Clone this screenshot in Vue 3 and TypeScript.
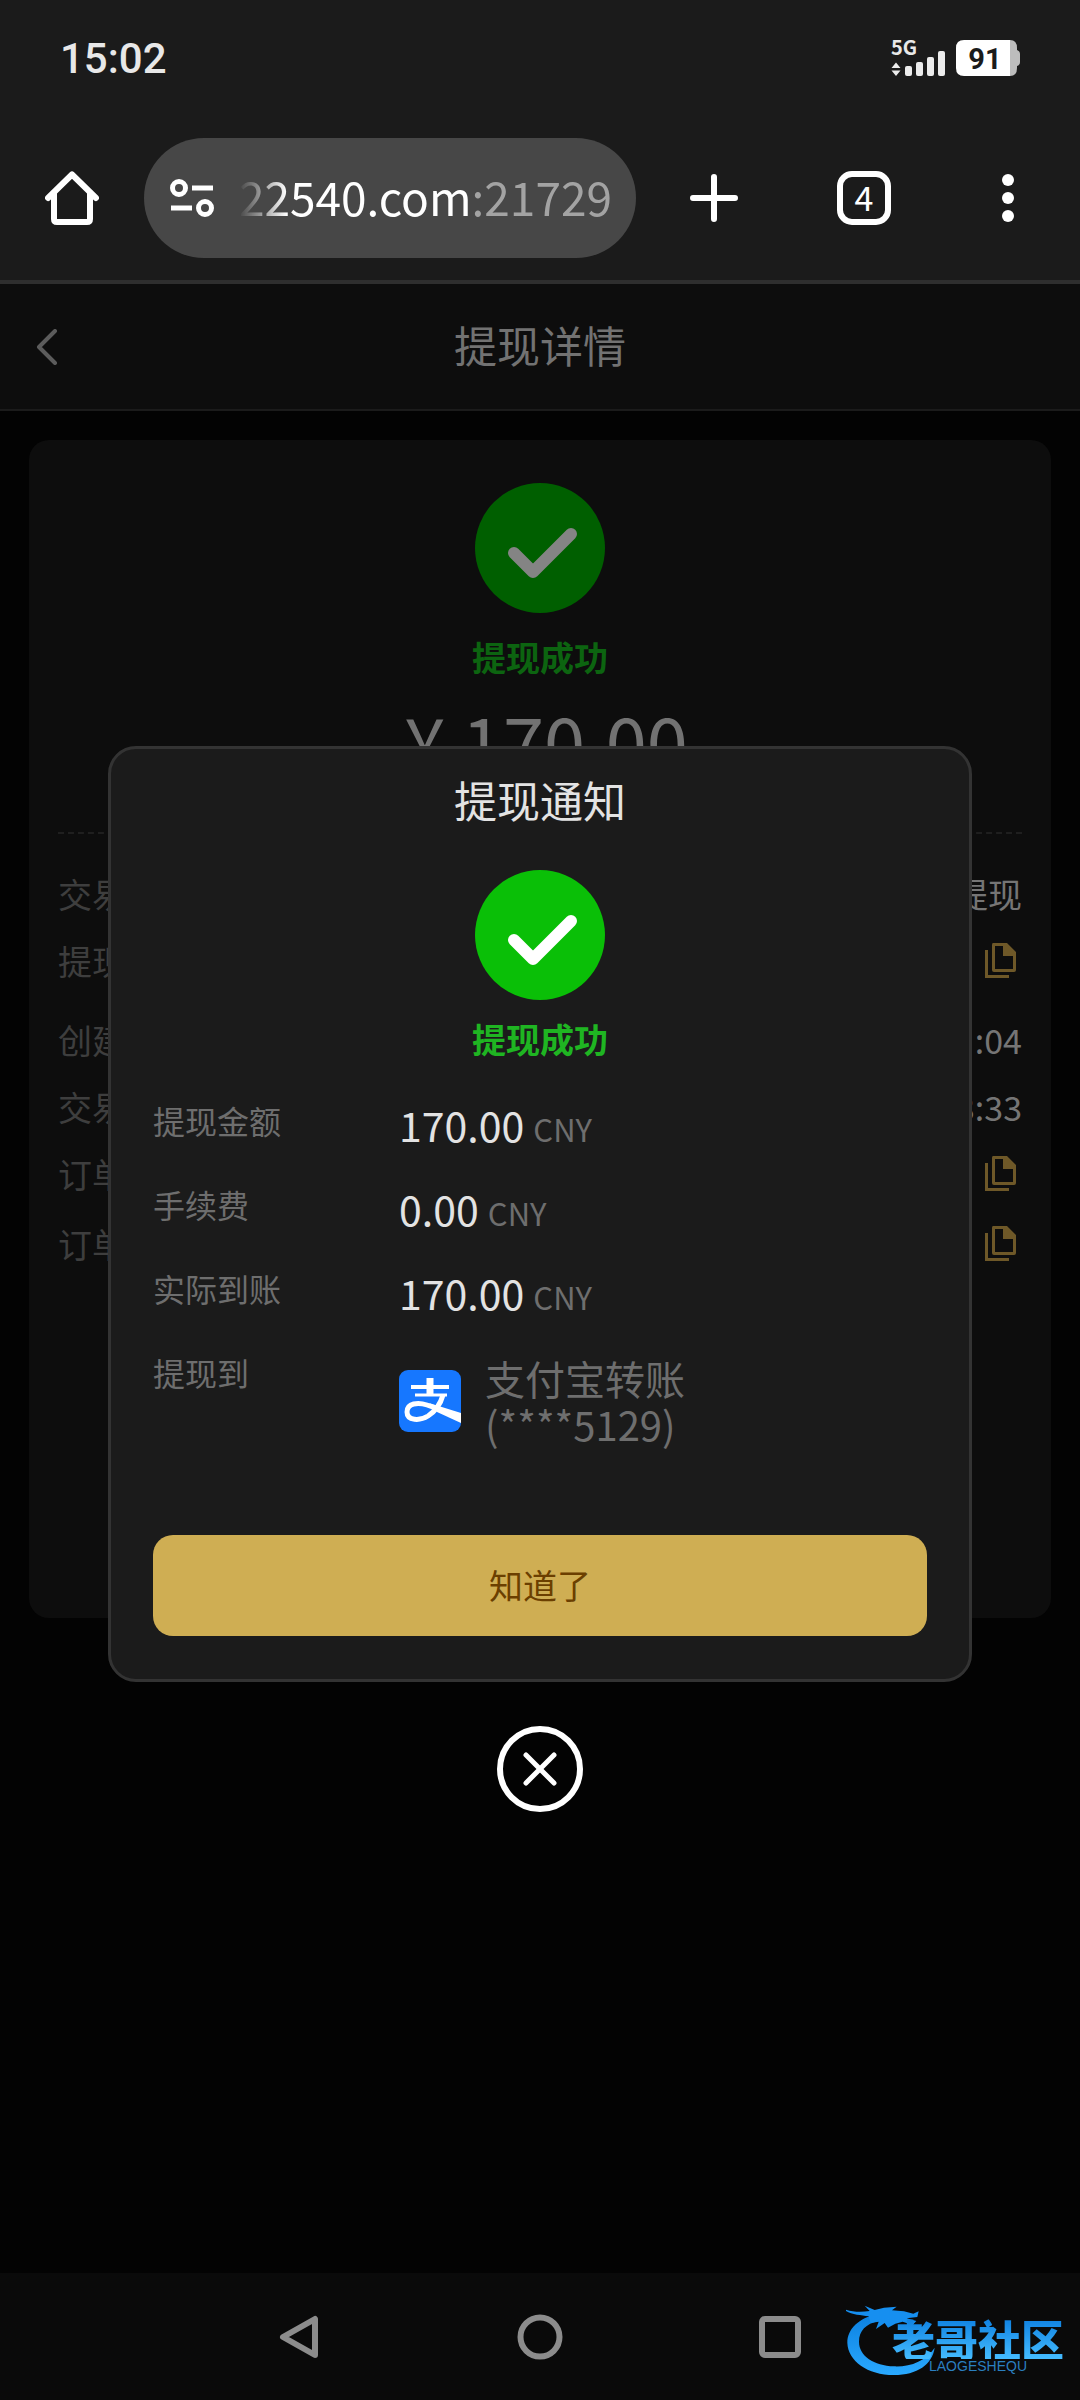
<script setup lang="ts">
interface DetailRow {
  label: string
  value?: string
  copy?: boolean
  gap?: 'wide' | 'small'
}

interface AmountRow {
  label: string
  amount: string
}

const details: DetailRow[] = [
  { label: '交易类型', value: '提现' },
  { label: '提现方式', copy: true },
  { label: '创建时间', value: ':04', gap: 'wide' },
  { label: '交易时间', value: '3:33' },
  { label: '订单号', copy: true },
  { label: '订单编号', copy: true, gap: 'small' },
]

const amounts: AmountRow[] = [
  { label: '提现金额', amount: '170.00' },
  { label: '手续费', amount: '0.00' },
  { label: '实际到账', amount: '170.00' },
]
</script>

<template>
  <div class="screen">
    <header class="chrome">
      <div class="status">
        <span class="clock">15:02</span>
        <div class="indicators">
          <div class="signal">
            <span class="network">5G</span>
            <svg class="bars" width="56" height="36" viewBox="0 0 56 36" aria-hidden="true">
              <path d="M5 22.500L9.500 28H.5zM5 36L.5 30.500h9z" />
              <rect x="14" y="26" width="7" height="10" rx="2" />
              <rect x="25" y="22" width="7" height="14" rx="2" />
              <rect x="36" y="17" width="7" height="19" rx="2" />
              <rect x="47" y="11" width="7" height="25" rx="2" />
            </svg>
          </div>
          <div class="battery">
            <svg width="64" height="36" viewBox="0 0 64 36" aria-hidden="true">
              <path d="M50 0h4q7 0 7 8v2q3 1 3 4v8q0 3-3 4v2q0 8-7 8h-4z" fill="#bdbdbd" />
              <path d="M8 0h46v36H8q-8 0-8-8V8q0-8 8-8z" fill="#fff" />
            </svg>
            <span class="level">91</span>
          </div>
        </div>
      </div>
      <div class="toolbar">
        <button class="icon-button" aria-label="主页">
          <svg width="54" height="54" viewBox="0 0 54 54" fill="none" stroke="#fff" stroke-width="6" stroke-linecap="round" stroke-linejoin="round">
            <path d="M3 27L27 3.500 51 27" />
            <path d="M9 22v26q0 3 3 3h30q3 0 3-3V22" />
          </svg>
        </button>
        <button class="address">
          <svg width="44" height="40" viewBox="0 0 44 40" fill="none" stroke="#fff" stroke-width="5">
            <circle cx="9" cy="10" r="6.500" />
            <path d="M22 10h21M1 30h21" />
            <circle cx="35" cy="30" r="6.500" />
          </svg>
          <span class="url">22540.com<span class="port">:21729</span></span>
        </button>
        <div class="actions">
          <button class="icon-button action" aria-label="新标签页">
            <svg width="48" height="48" viewBox="0 0 48 48" stroke="#fff" stroke-width="6" stroke-linecap="round">
              <path d="M24 3v42M3 24h42" />
            </svg>
          </button>
          <button class="icon-button action" aria-label="标签页">
            <span class="tabs">4</span>
          </button>
          <button class="icon-button action last" aria-label="菜单">
            <svg width="12" height="48" viewBox="0 0 12 48" fill="#fff">
              <circle cx="6" cy="6" r="6" />
              <circle cx="6" cy="24" r="6" />
              <circle cx="6" cy="42" r="6" />
            </svg>
          </button>
        </div>
      </div>
    </header>

    <main class="page">
      <nav class="navbar">
        <button class="icon-button back" aria-label="返回">
          <svg width="22" height="36" viewBox="0 0 22 36" fill="none" stroke="#5c5c5c" stroke-width="4" stroke-linecap="round" stroke-linejoin="round">
            <path d="M19 2L3 18l16 16" />
          </svg>
        </button>
        <h1 class="title">提现详情</h1>
      </nav>

      <section class="card">
        <svg class="badge" width="130" height="130" viewBox="0 0 130 130">
          <circle cx="65" cy="65" r="65" fill="#005f00" />
          <path d="M39 70l19 19 38-38" fill="none" stroke="#848484" stroke-width="12" stroke-linecap="round" stroke-linejoin="round" />
        </svg>
        <p class="result dim">提现成功</p>
        <p class="total">¥ 170.00</p>
        <hr class="divider" />
        <dl class="details">
          <div v-for="row in details" :key="row.label" class="detail" :class="row.gap">
            <dt>{{ row.label }}</dt>
            <dd>
              {{ row.value }}
              <button v-if="row.copy" class="icon-button copy" aria-label="复制">
                <svg width="31" height="35" viewBox="0 0 31 35" fill="#6e5828">
                  <path d="M0 7h3v25h21v3H0z" />
                  <path fill-rule="evenodd" d="M8 0h14l9 9v18q0 2-2 2H9q-2 0-2-2V2q0-2 1-2zM10 3v23h18V13H18V3z" />
                </svg>
              </button>
            </dd>
          </div>
        </dl>
      </section>

      <div class="overlay">
        <section class="modal" role="dialog" aria-labelledby="notice-title">
          <h2 id="notice-title" class="modal-title">提现通知</h2>
          <svg class="badge" width="130" height="130" viewBox="0 0 130 130">
            <circle cx="65" cy="65" r="65" fill="#0abf07" />
            <path d="M39 70l19 19 38-38" fill="none" stroke="#fff" stroke-width="12" stroke-linecap="round" stroke-linejoin="round" />
          </svg>
          <p class="result">提现成功</p>
          <dl class="amounts">
            <div v-for="row in amounts" :key="row.label" class="amount-row">
              <dt>{{ row.label }}</dt>
              <dd>{{ row.amount }} <span class="unit">CNY</span></dd>
            </div>
            <div class="amount-row">
              <dt>提现到</dt>
              <dd class="account">
                <svg width="62" height="62" viewBox="0 0 62 62">
                  <rect width="62" height="62" rx="9" fill="#1677ff" />
                  <g fill="none" stroke="#fff">
                    <path d="M31 8v17" stroke-width="7" />
                    <path d="M12 17h38" stroke-width="4" />
                    <path d="M16 25h32" stroke-width="3" />
                    <path d="M44 25C41 36 35 42 29 46 21 51 8 51 8 42 8 33 19 32 28 35L42 40" stroke-width="5" />
                  </g>
                  <path d="M30 33l32 10v10L38 42z" fill="#fff" />
                </svg>
                <span>支付宝转账<br />(****5129)</span>
              </dd>
            </div>
          </dl>
          <button class="confirm">知道了</button>
        </section>
        <button class="icon-button" aria-label="关闭">
          <svg width="86" height="86" viewBox="0 0 86 86" fill="none" stroke="#fff" stroke-width="6" stroke-linecap="round">
            <circle cx="43" cy="43" r="40" />
            <path d="M29 29l28 28M57 29L29 57" stroke-width="5" />
          </svg>
        </button>
      </div>
    </main>

    <footer class="system">
      <button class="icon-button key" aria-label="返回上一级">
        <svg width="46" height="46" viewBox="0 0 46 46" fill="none" stroke="#8c8c8c" stroke-width="6" stroke-linejoin="round">
          <path d="M6 23L38 5v36z" />
        </svg>
      </button>
      <button class="icon-button key" aria-label="主屏幕">
        <svg width="46" height="46" viewBox="0 0 46 46" fill="none" stroke="#8c8c8c" stroke-width="6">
          <circle cx="23" cy="23" r="19.500" />
        </svg>
      </button>
      <button class="icon-button key" aria-label="最近任务">
        <svg width="46" height="46" viewBox="0 0 46 46" fill="none" stroke="#8c8c8c" stroke-width="6">
          <rect x="5" y="5" width="36" height="36" rx="3" />
        </svg>
      </button>
      <div class="watermark">
        <svg width="92" height="74" viewBox="60 96 276 222" aria-hidden="true">
          <defs>
            <linearGradient id="sea" x1="0" y1="0" x2="0" y2="1">
              <stop offset="0" stop-color="#0b80e0" />
              <stop offset="1" stop-color="#2aa9ff" />
            </linearGradient>
          </defs>
          <path fill="url(#sea)" d="M165 128C102 140 70 175 70 215 72 270 130 312 210 312 280 312 325 280 332 230 305 270 260 288 210 286 150 284 105 255 105 212 105 180 125 158 165 150z" />
          <path fill="#168ff0" d="M66 116C90 124 115 123 137 120L122 104 152 117 180 110 218 107 204 118 240 121 268 128 284 121 280 138 248 142 277 150 266 162 236 152 214 158 192 170 182 156 156 174 164 152 140 156 134 136C112 132 84 132 66 120z" />
        </svg>
        <div class="brand">
          <strong>老哥社区</strong>
          <small>LAOGESHEQU</small>
        </div>
      </div>
    </footer>
  </div>
</template>

<style>
html,
body {
  background: #030303;
}
</style>

<style scoped>
.screen {
  display: flex;
  flex-direction: column;
  min-height: 100vh;
  background: #030303;
  color: #e8e8e8;
  font-family: "Noto Sans CJK SC", "Noto Sans", sans-serif;
}

h1,
h2,
p,
dl,
dd {
  margin: 0;
}

button {
  border: 0;
  padding: 0;
  background: none;
  color: inherit;
  font: inherit;
}

svg {
  display: block;
  flex: none;
}

.icon-button {
  display: flex;
  align-items: center;
  justify-content: center;
}

.chrome {
  background: #1b1b1b;
  border-bottom: 4px solid #2e2e2e;
}

.status {
  display: flex;
  align-items: center;
  justify-content: space-between;
  height: 116px;
  padding: 0 60px;
}

.clock {
  padding-top: 2px;
  font-family: Roboto, sans-serif;
  font-size: 42px;
  line-height: 48px;
  font-weight: 500;
}

.indicators {
  display: flex;
  gap: 9px;
}

.signal,
.battery {
  position: relative;
}

.network {
  position: absolute;
  top: -3px;
  left: 0;
  font-size: 20px;
  line-height: 20px;
  font-weight: 700;
}

.bars {
  fill: #ececec;
}

.level {
  position: absolute;
  inset: 0 6px 0 0;
  color: #1b1b1b;
  font-family: Roboto, sans-serif;
  font-size: 29px;
  line-height: 38px;
  font-weight: 700;
  text-align: center;
}

.toolbar {
  display: flex;
  align-items: center;
  height: 164px;
  padding-left: 45px;
}

.address {
  display: flex;
  flex: 1;
  align-items: center;
  justify-content: space-between;
  height: 120px;
  margin-left: 45px;
  padding: 0 24px 0 26px;
  border-radius: 60px;
  background: #474747;
  color: #fff;
}

.url {
  padding-bottom: 4px;
  font-size: 46px;
  line-height: 60px;
  white-space: nowrap;
  mask-image: linear-gradient(90deg, transparent, #000 48px);
}

.port {
  color: #a3a3a3;
}

.actions {
  display: flex;
  padding: 0 3px;
}

.action {
  width: 150px;
  height: 120px;
}

.action.last {
  width: 138px;
}

.tabs {
  box-sizing: border-box;
  width: 54px;
  height: 54px;
  border: 6px solid #fff;
  border-radius: 15px;
  color: #fff;
  font-size: 34px;
  line-height: 40px;
  text-align: center;
}

.page {
  position: relative;
  flex: 1;
}

.navbar {
  position: relative;
  display: flex;
  align-items: center;
  justify-content: center;
  height: 125px;
  border-bottom: 2px solid #1b1b1b;
  background: #0d0d0d;
}

.back {
  position: absolute;
  left: 0;
  width: 93px;
  height: 100%;
}

.title,
.modal-title {
  font-size: 43px;
  line-height: 60px;
  font-weight: 400;
}

.title {
  padding-bottom: 6px;
  color: #727272;
}

.card {
  display: flex;
  flex-direction: column;
  min-height: 1135px;
  margin: 29px;
  padding: 43px 29px 0;
  border-radius: 20px;
  background: #0d0d0d;
}

.badge {
  align-self: center;
}

.result {
  margin-top: 14px;
  color: #1fb522;
  font-size: 34px;
  line-height: 50px;
  font-weight: 700;
  text-align: center;
}

.result.dim {
  margin-top: 19px;
  color: #0c6410;
}

.total {
  margin-top: 8px;
  padding-left: 12px;
  color: #727272;
  font-size: 74px;
  line-height: 100px;
  text-align: center;
}

.divider {
  width: 100%;
  margin: 42px 0 26px;
  border: 0;
  border-top: 2px dashed #1f1f1f;
}

.detail {
  display: flex;
  align-items: center;
  justify-content: space-between;
  height: 67px;
  color: #3e3e3e;
  font-size: 34px;
  line-height: 50px;
}

.detail.wide {
  margin-top: 12px;
}

.detail.small {
  margin-top: 3px;
}

.detail dd {
  color: #757575;
}

.copy {
  margin-right: 6px;
}

.overlay {
  position: absolute;
  inset: 0;
  display: flex;
  flex-direction: column;
  align-items: center;
  justify-content: center;
  gap: 44px;
}

.modal {
  box-sizing: border-box;
  display: flex;
  flex-direction: column;
  width: 80%;
  padding: 20px 42px 43px;
  border: 3px solid #333;
  border-radius: 28px;
  background: #1b1b1b;
}

.modal-title {
  margin-bottom: 41px;
  color: #e3e3e3;
  text-align: center;
}

.amounts {
  display: flex;
  flex-direction: column;
  gap: 36px;
  margin-top: 39px;
}

.amount-row {
  display: flex;
  min-height: 48px;
}

.amount-row dt {
  width: 246px;
  color: #6e6e6e;
  font-size: 32px;
  line-height: 34px;
}

.amount-row dd {
  color: #e3e3e3;
  font-size: 41px;
  line-height: 42px;
}

.unit {
  color: #6e6e6e;
  font-size: 31px;
  line-height: 34px;
}

.amount-row .account {
  display: flex;
  align-items: center;
  gap: 24px;
  color: #6e6e6e;
  font-size: 40px;
  line-height: 46px;
}

.confirm {
  height: 101px;
  margin-top: 88px;
  border-radius: 20px;
  background: #cfae53;
  color: #6b3f00;
  font-size: 34px;
  line-height: 50px;
}

.system {
  position: relative;
  display: flex;
  align-items: center;
  justify-content: center;
  gap: 194px;
  height: 127px;
  background: #0a0a0a;
}

.watermark {
  position: absolute;
  right: 16px;
  top: 30px;
  display: flex;
}

.brand {
  display: flex;
  flex-direction: column;
  margin: 14px 0 0 -44px;
}

.brand strong {
  background: linear-gradient(#0d7fe0, #45bcff);
  background-clip: text;
  color: transparent;
  font-size: 43px;
  line-height: 42px;
  font-weight: 900;
}

.brand small {
  align-self: center;
  color: #2a7fc0;
  font-family: "Liberation Sans", sans-serif;
  font-size: 14px;
  line-height: 14px;
}
</style>
